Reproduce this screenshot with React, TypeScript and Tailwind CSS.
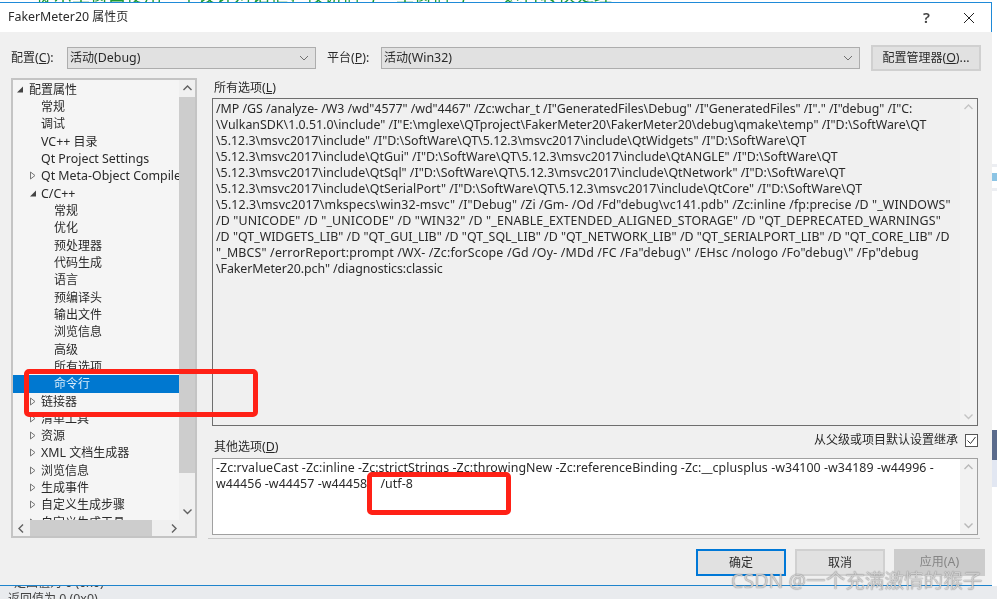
import { Fragment } from "react";

const allOptions = [
  '/MP /GS /analyze- /W3 /wd"4577" /wd"4467" /Zc:wchar_t /I"GeneratedFiles\\Debug" /I"GeneratedFiles" /I"." /I"debug" /I"C:',
  '\\VulkanSDK\\1.0.51.0\\include" /I"E:\\mglexe\\QTproject\\FakerMeter20\\FakerMeter20\\debug\\qmake\\temp" /I"D:\\SoftWare\\QT',
  '\\5.12.3\\msvc2017\\include" /I"D:\\SoftWare\\QT\\5.12.3\\msvc2017\\include\\QtWidgets" /I"D:\\SoftWare\\QT',
  '\\5.12.3\\msvc2017\\include\\QtGui" /I"D:\\SoftWare\\QT\\5.12.3\\msvc2017\\include\\QtANGLE" /I"D:\\SoftWare\\QT',
  '\\5.12.3\\msvc2017\\include\\QtSql" /I"D:\\SoftWare\\QT\\5.12.3\\msvc2017\\include\\QtNetwork" /I"D:\\SoftWare\\QT',
  '\\5.12.3\\msvc2017\\include\\QtSerialPort" /I"D:\\SoftWare\\QT\\5.12.3\\msvc2017\\include\\QtCore" /I"D:\\SoftWare\\QT',
  '\\5.12.3\\msvc2017\\mkspecs\\win32-msvc" /I"Debug" /Zi /Gm- /Od /Fd"debug\\vc141.pdb" /Zc:inline /fp:precise /D "_WINDOWS"',
  '/D "UNICODE" /D "_UNICODE" /D "WIN32" /D "_ENABLE_EXTENDED_ALIGNED_STORAGE" /D "QT_DEPRECATED_WARNINGS"',
  '/D "QT_WIDGETS_LIB" /D "QT_GUI_LIB" /D "QT_SQL_LIB" /D "QT_NETWORK_LIB" /D "QT_SERIALPORT_LIB" /D "QT_CORE_LIB" /D',
  '"_MBCS" /errorReport:prompt /WX- /Zc:forScope /Gd /Oy- /MDd /FC /Fa"debug\\" /EHsc /nologo /Fo"debug\\" /Fp"debug',
  '\\FakerMeter20.pch" /diagnostics:classic',
];

// the substitute font runs a little off on some lines
const lineFit = [
  "tracking-[-0.04px]",
  "",
  "",
  "",
  "",
  "",
  "tracking-[0.09px]",
  "tracking-[0.14px]",
  "",
  "tracking-[0.17px]",
  "tracking-[-0.07px]",
];

const otherOptions = [
  "-Zc:rvalueCast -Zc:inline -Zc:strictStrings -Zc:throwingNew -Zc:referenceBinding -Zc:__cplusplus -w34100 -w34189 -w44996 -",
  "w44456 -w44457 -w44458    /utf-8",
];

type Row = { label: string; level: 0 | 1 | 2; arrow?: "open" | "closed"; selected?: boolean };

const rows: Row[] = [
  { label: "配置属性", level: 0, arrow: "open" },
  { label: "常规", level: 1 },
  { label: "调试", level: 1 },
  { label: "VC++ 目录", level: 1 },
  { label: "Qt Project Settings", level: 1 },
  { label: "Qt Meta-Object Compiler", level: 1, arrow: "closed" },
  { label: "C/C++", level: 1, arrow: "open" },
  { label: "常规", level: 2 },
  { label: "优化", level: 2 },
  { label: "预处理器", level: 2 },
  { label: "代码生成", level: 2 },
  { label: "语言", level: 2 },
  { label: "预编译头", level: 2 },
  { label: "输出文件", level: 2 },
  { label: "浏览信息", level: 2 },
  { label: "高级", level: 2 },
  { label: "所有选项", level: 2 },
  { label: "命令行", level: 2, selected: true },
  { label: "链接器", level: 1, arrow: "closed" },
  { label: "清单工具", level: 1, arrow: "closed" },
  { label: "资源", level: 1, arrow: "closed" },
  { label: "XML 文档生成器", level: 1, arrow: "closed" },
  { label: "浏览信息", level: 1, arrow: "closed" },
  { label: "生成事件", level: 1, arrow: "closed" },
  { label: "自定义生成步骤", level: 1, arrow: "closed" },
  { label: "自定义生成工具", level: 1, arrow: "closed" },
];

const indent = { 0: "pl-[16px]", 1: "pl-[28px]", 2: "pl-[41px]" };
const arrowPlace = { 0: "left-[3px]", 1: "left-[16px]", 2: "left-[29px]" };

// "&" underlines the next letter, like a Win32 mnemonic
function Mixed({ text }: { text: string }) {
  const runs = text.match(/[\x00-\x7F]+|[^\x00-\x7F]+/g) ?? [];
  return (
    <>
      {runs.map((run, i) => {
        if (run.charCodeAt(0) > 127) return <Fragment key={i}>{run}</Fragment>;
        const [head, tail] = run.split("&");
        return (
          <span key={i} className="whitespace-pre text-[12.4px]">
            {head}
            {tail !== undefined && (
              <>
                <u>{tail[0]}</u>
                {tail.slice(1)}
              </>
            )}
          </span>
        );
      })}
    </>
  );
}

function TreeArrow({ kind }: { kind: "open" | "closed" }) {
  return (
    <svg width="8" height="9" viewBox="0 0 8 9" className="block">
      {kind === "open" ? (
        <path d="M7 1.5V7.5H1Z" fill="#444" />
      ) : (
        <path d="M1.5 1L6 4.5L1.5 8Z" fill="none" stroke="#777" strokeWidth="1" />
      )}
    </svg>
  );
}

function Chevron({ dir, color = "#606060" }: { dir: "up" | "down" | "left" | "right"; color?: string }) {
  const d = {
    up: "M1.5 7L5.5 3L9.5 7",
    down: "M1.5 3.5L5.5 7.5L9.5 3.5",
    left: "M7 1.5L3 5.5L7 9.5",
    right: "M4 1.5L8 5.5L4 9.5",
  }[dir];
  return (
    <svg width="11" height="11" viewBox="0 0 11 11">
      <path d={d} fill="none" stroke={color} strokeWidth="1.4" />
    </svg>
  );
}

function Combo({ value, width }: { value: string; width: string }) {
  return (
    <div className={`${width} flex h-[22px] items-center justify-between border border-[#adadad] bg-[#e1e1e1] pl-[2px] pr-[6px]`}>
      <span>
        <Mixed text={value} />
      </span>
      <svg width="10" height="6" viewBox="0 0 10 6">
        <path d="M1 1L5 5L9 1" fill="none" stroke="#707070" strokeWidth="1" />
      </svg>
    </div>
  );
}

function TextScrollbar({ color }: { color: string }) {
  return (
    <div className="flex w-[17px] shrink-0 flex-col items-center justify-between bg-[#f2f2f2] py-[3px]">
      <Chevron dir="up" color={color} />
      <Chevron dir="down" color={color} />
    </div>
  );
}

function Tree() {
  return (
    <div className="flex h-[460px] w-[186px] shrink-0 flex-col border-2 border-[#c4c4c4] bg-[#f5f5f5]">
      <div className="flex min-h-0 flex-1">
        <div className="min-w-0 flex-1 overflow-hidden pt-[0.6px]">
          {rows.map((row, i) => (
            <div
              key={i}
              className={`relative h-[17.33px] whitespace-nowrap leading-[18px] ${indent[row.level]} ${
                row.selected ? "bg-[#0078d0] text-[#d8ecfa]" : ""
              }`}
            >
              {row.arrow && (
                <span className={`absolute top-[4px] ${arrowPlace[row.level]}`}>
                  <TreeArrow kind={row.arrow} />
                </span>
              )}
              <Mixed text={row.label} />
            </div>
          ))}
        </div>
        <div className="flex w-[16px] shrink-0 flex-col bg-[#f0f0f0]">
          <div className="flex h-[17px] items-center justify-center">
            <Chevron dir="up" />
          </div>
          <div className="h-[376px] bg-[#cdcdcd]" />
          <div className="flex-1" />
          <div className="flex h-[17px] items-center justify-center">
            <Chevron dir="down" />
          </div>
        </div>
      </div>
      <div className="flex h-[16px] shrink-0 items-center bg-[#f0f0f0]">
        <div className="flex w-[17px] justify-center">
          <Chevron dir="left" />
        </div>
        <div className="h-full w-[122px] bg-[#cdcdcd]" />
        <div className="flex flex-1 justify-center">
          <Chevron dir="right" />
        </div>
      </div>
    </div>
  );
}

function DialogButton({ label, tone }: { label: string; tone: "default" | "plain" | "off" }) {
  const look = {
    default: "w-[90px] border-2 border-[#0078d7] bg-[#e1e1e1]",
    plain: "w-[90px] border-2 border-[#d0d0d0] bg-[#e1e1e1]",
    off: "w-[91px] border-2 border-[#cccccc] bg-[#cccccc] text-[#858585]",
  }[tone];
  return (
    <div className={`flex h-[27px] items-center justify-center ${look}`}>
      <span>
        <Mixed text={label} />
      </span>
    </div>
  );
}

export default function App() {
  return (
    <div className="relative flex h-[599px] w-[997px] flex-col overflow-hidden bg-white font-['Noto_Sans','Noto_Sans_CJK_SC',sans-serif] text-[12px] text-[#2a2a2a] blur-[0.35px]">
      <div className="h-[2px] shrink-0 overflow-hidden">
        <div className="-mt-[15px] whitespace-nowrap pl-[36px] text-[18px] leading-[20px] text-[#1e9a35]">
          提示主窗口使用一个设计对话框，按钮信号一主窗信号一一进行转换处理
        </div>
      </div>

      <div className="flex min-h-0 flex-1">
        <div className="flex w-[992px] shrink-0 flex-col">
          <div className="flex h-[30px] shrink-0 items-center justify-between border-t border-r border-[#1f8ad8] bg-white pl-[8px] pr-[16px]">
            <span>
              <Mixed text="FakerMeter20 属性页" />
            </span>
            <div className="flex items-center gap-[33px]">
              <span className="text-[15px] font-semibold text-[#444]">?</span>
              <svg width="12" height="12" viewBox="0 0 12 12">
                <path d="M1 1L11 11M11 1L1 11" stroke="#222" strokeWidth="1" />
              </svg>
            </div>
          </div>

          <div className="flex min-h-0 flex-1 flex-col border-b border-[#1f84cc] bg-[#f0f0f0] pl-[11px] pr-[7px] pt-[13px]">
            <div className="flex h-[26px] items-center">
              <span className="w-[56px]">
                <Mixed text="配置(&C):" />
              </span>
              <Combo value="活动(Debug)" width="w-[249px]" />
              <span className="ml-[11px] w-[54px]">
                <Mixed text="平台(&P):" />
              </span>
              <Combo value="活动(Win32)" width="w-[479px]" />
              <div className="ml-[11px] flex h-[26px] w-[110px] items-center justify-center border-2 border-[#d0d0d0] bg-[#e1e1e1]">
                <span>
                  <Mixed text="配置管理器(&O)..." />
                </span>
              </div>
            </div>

            <div className="mt-[7px] flex">
              <Tree />
              <div className="ml-[11px] flex w-[772px] flex-col">
                <div className="ml-[4px] flex w-[766px] flex-col">
                  <div className="flex h-[20px] items-center pl-[2px]">
                    <span>
                      <Mixed text="所有选项(&L)" />
                    </span>
                  </div>
                  <div className="flex h-[328px] border border-[#6e6e6e] bg-[#f0f0f0]">
                    <div className="min-w-0 flex-1 overflow-hidden pl-[3px] pt-[2px] text-[12.4px] leading-[16px]">
                      {allOptions.map((line, i) => (
                        <div key={line} className={`whitespace-pre ${lineFit[i]}`}>
                          {line}
                        </div>
                      ))}
                    </div>
                    <TextScrollbar color="#c4c4c4" />
                  </div>
                  <div className="flex h-[32px] items-center justify-between pl-[2px]">
                    <span className="mt-[10px]">
                      <Mixed text="其他选项(&D)" />
                    </span>
                    <div className="mb-[4px] flex items-center gap-[7px]">
                      <span>从父级或项目默认设置继承</span>
                      <span className="flex h-[13px] w-[13px] items-center justify-center border border-[#555] bg-white">
                        <svg width="11" height="11" viewBox="0 0 11 11">
                          <path d="M1.5 5.5L4.5 8.5L9.5 2" fill="none" stroke="#333" strokeWidth="1" />
                        </svg>
                      </span>
                    </div>
                  </div>
                  <div className="flex h-[77px] border border-[#a0a0a0] bg-white">
                    <div className="min-w-0 flex-1 overflow-hidden pl-[3px] pt-[1px] text-[12.4px] leading-[16px] tracking-[0.06px]">
                      {otherOptions.map((line) => (
                        <div key={line} className="whitespace-pre">
                          {line}
                        </div>
                      ))}
                    </div>
                    <TextScrollbar color="#b8b8b8" />
                  </div>
                </div>
                <div className="mt-[3px] h-px bg-[#c8c8c8]" />
              </div>
            </div>

            <div className="mt-[10px] flex justify-end gap-[9px]">
              <DialogButton label="确定" tone="default" />
              <DialogButton label="取消" tone="plain" />
              <DialogButton label="应用(A)" tone="off" />
            </div>
          </div>
        </div>

        <div className="flex flex-1 flex-col">
          <div className="h-[162px] bg-white" />
          <div className="h-[3px] bg-[#eceef2]" />
          <div className="h-[6px] bg-white" />
          <div className="h-[8px] bg-[#8cc4e4]" />
          <div className="h-[7px] bg-white" />
          <div className="h-[3px] bg-[#eceef2]" />
          <div className="h-[239px] bg-white" />
          <div className="h-[30px] bg-[#5b6b8c]" />
          <div className="h-[27px] bg-[#e2e7f2]" />
          <div className="flex-1 bg-white" />
        </div>
      </div>

      <div className="h-[13px] shrink-0 overflow-hidden bg-[#e9ebee] pl-[8px] text-[#444]">
        <div className="-mt-[10px] h-[16px] pl-[6px] leading-[13px]">
          <Mixed text="定回值为 0 (0x0)" />
        </div>
        <div className="leading-[13px]">
          <Mixed text="返回值为 0 (0x0)" />
        </div>
      </div>

      <div className="absolute left-[24px] top-[369px] h-[48px] w-[234px] rounded-[5px] border-[5px] border-[#ff2116]" />
      <div className="absolute left-[367px] top-[472px] h-[43px] w-[144px] rounded-[5px] border-[5px] border-[#ff2116]" />
      <div className="absolute left-[731px] top-[568px] whitespace-nowrap text-[19.6px] leading-[26px] text-white/70 [text-shadow:0_0_1px_#444]">
        CSDN @一个充满激情的猴子
      </div>
    </div>
  );
}
